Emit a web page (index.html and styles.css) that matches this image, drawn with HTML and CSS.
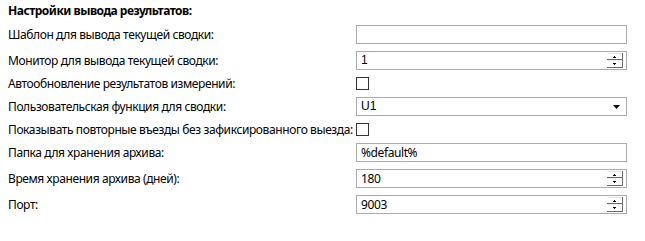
FILE: index.html
```html
<!DOCTYPE html>
<html lang="ru">
<head>
    <meta charset="UTF-8">
    <title>Настройки вывода результатов</title>
    <link rel="stylesheet" href="styles.css">
</head>
<body>
    <div class="settings">
        <h1 class="title">Настройки вывода результатов:</h1>

        <div class="form">
            <label class="label">Шаблон для вывода текущей сводки:</label>
            <div class="field"></div>

            <label class="label">Монитор для вывода текущей сводки:</label>
            <div class="field spin">
                <span class="value classic">1</span>
                <svg class="spinner" width="16" height="15" viewBox="0 0 16 15">
                    <path d="M0.5 0.5H15.5V14.5H0.5" fill="none" stroke="#e3e3e3"/>
                    <path d="M0 6.5H15.5V0M0 14.5H15.5V7" fill="none" stroke="#696969"/>
                    <path d="M0 7.5H15" stroke="#f0f0f0"/>
                    <path d="M7 3h1v1h1v1H6V4h1z" fill="#000"/>
                    <path d="M6 10h3v1H8v1H7v-1H6z" fill="#000"/>
                </svg>
            </div>

            <label class="label">Автообновление результатов измерений:</label>
            <div class="check-cell"><span class="check"></span></div>

            <label class="label">Пользовательская функция для сводки:</label>
            <div class="field combo">
                <span class="value classic">U1</span>
                <svg class="arrow" width="7" height="4" viewBox="0 0 7 4">
                    <path d="M0 0H7L3.5 4z" fill="#000"/>
                </svg>
            </div>

            <label class="label">Показывать повторные въезды без зафиксированного выезда:</label>
            <div class="check-cell"><span class="check"></span></div>

            <label class="label">Папка для хранения архива:</label>
            <div class="field"><span class="value">%default%</span></div>

            <label class="label">Время хранения архива (дней):</label>
            <div class="field spin">
                <span class="value">180</span>
                <svg class="spinner" width="16" height="15" viewBox="0 0 16 15">
                    <path d="M0.5 0.5H15.5V14.5H0.5" fill="none" stroke="#e3e3e3"/>
                    <path d="M0 6.5H15.5V0M0 14.5H15.5V7" fill="none" stroke="#696969"/>
                    <path d="M0 7.5H15" stroke="#f0f0f0"/>
                    <path d="M7 3h1v1h1v1H6V4h1z" fill="#000"/>
                    <path d="M6 10h3v1H8v1H7v-1H6z" fill="#000"/>
                </svg>
            </div>

            <label class="label">Порт:</label>
            <div class="field spin">
                <span class="value">9003</span>
                <svg class="spinner" width="16" height="15" viewBox="0 0 16 15">
                    <path d="M0.5 0.5H15.5V14.5H0.5" fill="none" stroke="#e3e3e3"/>
                    <path d="M0 6.5H15.5V0M0 14.5H15.5V7" fill="none" stroke="#696969"/>
                    <path d="M0 7.5H15" stroke="#f0f0f0"/>
                    <path d="M7 3h1v1h1v1H6V4h1z" fill="#000"/>
                    <path d="M6 10h3v1H8v1H7v-1H6z" fill="#000"/>
                </svg>
            </div>
        </div>
    </div>
</body>
</html>
```

FILE: styles.css
```css
/* Base */
* {
    margin: 0;
    padding: 0;
    box-sizing: border-box;
}

body {
    background: #fff;
    color: #000;
    font-family: "Noto Sans", "Open Sans", sans-serif;
    font-size: 12px;
    letter-spacing: -0.4px;
}

.settings {
    padding: 3px 8px;
}

.title {
    font-size: 12px;
    font-weight: bold;
    line-height: 16px;
    letter-spacing: -0.5px;
    margin-bottom: 6px;
}

/* Form grid */
.form {
    display: grid;
    grid-template-columns: 348px 271px;
    row-gap: 7px;
    align-items: center;
}

.label {
    line-height: 13px;
    white-space: nowrap;
}

.field {
    height: 19px;
    border: 1px solid #ababab;
    background: #fff;
    display: flex;
    align-items: center;
    padding: 0 3px 0 4px;
}

.value {
    flex: 1;
    line-height: 15px;
}

.value.classic {
    font-family: "Liberation Sans", Arial, sans-serif;
    font-size: 12px;
    letter-spacing: 0;
}

.spinner {
    display: block;
    flex: none;
}

.combo .arrow {
    display: block;
    flex: none;
    margin-right: 3px;
}

.check-cell {
    height: 13px;
    display: flex;
}

.check {
    width: 13px;
    height: 13px;
    border: 1px solid #333;
    background: #fff;
}
```
